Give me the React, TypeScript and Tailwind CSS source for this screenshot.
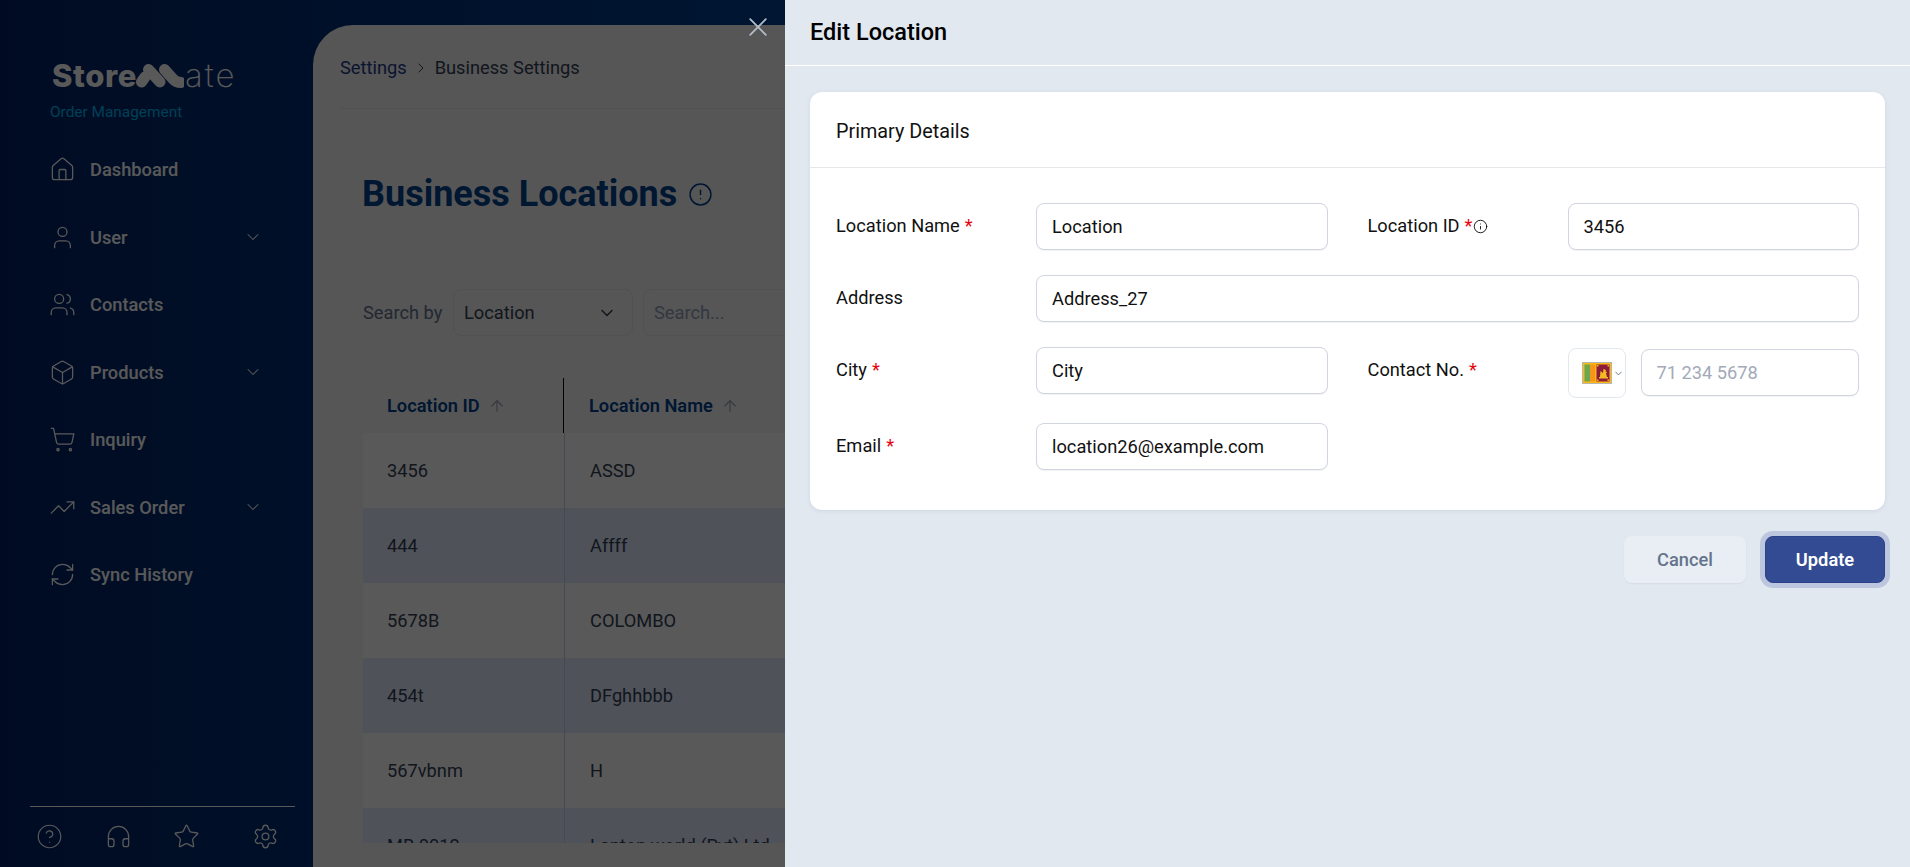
import {
  ArrowUp,
  Box,
  ChevronDown,
  ChevronRight,
  CircleAlert,
  CircleHelp,
  Headphones,
  House,
  Info,
  RefreshCw,
  Settings,
  ShoppingCart,
  Star,
  TrendingUp,
  User,
  Users,
  X,
} from "lucide-react";

const navItems = [
  { label: "Dashboard", icon: House },
  { label: "User", icon: User, more: true },
  { label: "Contacts", icon: Users },
  { label: "Products", icon: Box, more: true },
  { label: "Inquiry", icon: ShoppingCart },
  { label: "Sales Order", icon: TrendingUp, more: true },
  { label: "Sync History", icon: RefreshCw },
];

const rows = [
  ["3456", "ASSD"],
  ["444", "Affff"],
  ["5678B", "COLOMBO"],
  ["454t", "DFghhbbb"],
  ["567vbnm", "H"],
  ["MB 0012", "Lanton world (Pvt) Ltd"],
];

const Logo = () => (
  <div className="flex h-[30px] items-center pl-[12px] leading-none text-white">
    <span className="font-['Inter'] text-[31px] font-extrabold tracking-[0.6px]">Store</span>
    <svg width="48" height="25" viewBox="0 0 48 25" className="-ml-px">
      <g fill="none" stroke="currentColor" strokeWidth="11" strokeLinecap="round">
        <path d="M5.5 19L9 14" />
        <path d="M12.5 6.5L24 19" />
        <path d="M28.5 6.5L37 16Q40 19.5 45 19.5" />
      </g>
    </svg>
    <span className="ml-px font-['Inter'] text-[33px] font-extralight tracking-[2px]">ate</span>
  </div>
);

const Sidebar = () => (
  <aside className="flex h-full w-[313px] shrink-0 flex-col pt-[60px]">
    <div className="pl-[40px]">
      <Logo />
      <div className="mt-[12px] pl-[10px] text-[15.4px] leading-[20px] text-[#00b8f0]">Order Management</div>
    </div>
    <nav className="mt-[14px] flex flex-col pl-[50px] pr-[49px]">
      {navItems.map((item) => (
        <div key={item.label} className="flex h-[67.5px] items-center text-white">
          <item.icon size={27} strokeWidth={1.15} className="-mx-px shrink-0" />
          <span className="ml-[15px] flex-1 text-[18.25px] font-medium">{item.label}</span>
          {item.more && <ChevronDown size={20} strokeWidth={1.25} className="mr-[1px]" />}
        </div>
      ))}
    </nav>
    <div className="mt-auto mr-[18px] mb-[19px] ml-[30px] border-t border-white pt-[17px]">
      <div className="flex h-[24px] items-center text-white">
        <CircleHelp size={27} strokeWidth={1.05} className="ml-[5.5px]" />
        <Headphones size={27} strokeWidth={1.15} className="ml-[42px]" />
        <Star size={27} strokeWidth={1.15} className="ml-[41px]" />
        <Settings size={27} strokeWidth={1.15} className="ml-[52px]" />
      </div>
    </div>
  </aside>
);

const LocationsPage = () => (
  <main className="mt-[25px] h-[842px] flex-1 overflow-hidden rounded-tl-[40px] bg-[#f5f5f6] pl-[27px]">
    <div className="flex h-[84px] items-center gap-[6px] border-b border-gray-200 pt-[2px] text-[18.25px] text-[#334155]">
      <span className="text-[#1e3a8a]">Settings</span>
      <ChevronRight size={16} strokeWidth={1.5} />
      <span>Business Settings</span>
    </div>
    <div className="pl-[23px]">
      <div className="mt-[60px] -ml-px flex items-center gap-[11px]">
        <h1 className="text-[36px] leading-[50px] font-bold text-[#024290]">Business Locations</h1>
        <CircleAlert size={25} strokeWidth={1.4} className="text-[#024290]" />
      </div>
      <div className="mt-[70px] flex h-[47px] items-center text-[18.25px]">
        <span className="w-[90px] text-slate-500">Search by</span>
        <div className="flex h-[47px] w-[180px] items-center justify-between rounded-lg border border-gray-200 pr-[15px] pl-[10px] text-[#334155]">
          Location
          <ChevronDown size={20} strokeWidth={1.75} />
        </div>
        <div className="ml-[10px] flex h-[47px] flex-1 items-center rounded-lg border border-gray-200 pl-[10px] text-slate-400">
          Search...
        </div>
      </div>
      <div className="mt-[42px] h-[465px] overflow-hidden">
        <div className="flex h-[55px] items-center bg-[#f7f7f8] text-[18.25px] font-semibold text-[#024290]">
          <div className="flex h-full w-[201px] items-center gap-[8px] border-r border-black pl-[24px]">
            Location ID
            <ArrowUp size={18} strokeWidth={1.5} className="text-gray-400" />
          </div>
          <div className="flex h-full items-center gap-[8px] pl-[25px]">
            Location Name
            <ArrowUp size={18} strokeWidth={1.5} className="text-gray-400" />
          </div>
        </div>
        {rows.map((row, i) => (
          <div
            key={row[0]}
            className={`flex h-[75px] items-center text-[18.25px] text-[#334155] ${i % 2 ? "bg-[#e2ebff]" : "bg-white"}`}
          >
            <div className="flex h-full w-[202px] items-center border-r border-[#c3d2ee] pl-[24px]">{row[0]}</div>
            <div className="pl-[25px]">{row[1]}</div>
          </div>
        ))}
      </div>
    </div>
  </main>
);

const Label = ({ text, required, info }: { text: string; required?: boolean; info?: boolean }) => (
  <div className="flex h-[47px] w-[200px] shrink-0 items-center pb-[1px] text-[18.25px] text-[#111111]">
    {text}
    {required && <span className="ml-[5px] text-red-600">*</span>}
    {info && <Info size={15} strokeWidth={1.5} className="ml-px" />}
  </div>
);

const Field = ({ value, placeholder, className = "flex-1" }: { value?: string; placeholder?: string; className?: string }) => (
  <div
    className={`flex h-[47px] items-center rounded-lg border border-[#d1d5e0] bg-white pt-[1px] pl-[15px] text-[18.25px] shadow-[0_1px_1px_rgba(0,0,0,0.05)] ${className} ${value ? "text-[#111111]" : "text-[#a3aab8]"}`}
  >
    {value || placeholder}
  </div>
);

const SriLankaFlag = () => (
  <svg width="30" height="22" viewBox="0 0 30 22" className="shrink-0">
    <rect width="30" height="22" fill="#b5b5b5" />
    <rect x="1" y="1" width="28" height="20" fill="#fdb813" />
    <rect x="2.5" y="2.5" width="5.5" height="17" fill="#6aa84f" />
    <rect x="8" y="2.5" width="5" height="17" fill="#f7941d" />
    <rect x="14.5" y="2.5" width="13" height="17" fill="#8d1b3d" />
    <path d="M17 15h9v1.5h-9zM18 15l.5-6 2.5 2 .5-4 2.5 1-.5 1.5 1.5 .5-1 1.5 1 3.5z" fill="#f5b921" />
    <rect x="15" y="3" width="1.5" height="1.5" fill="#fdb813" />
    <rect x="25.5" y="3" width="1.5" height="1.5" fill="#fdb813" />
    <rect x="15" y="17.5" width="1.5" height="1.5" fill="#fdb813" />
    <rect x="25.5" y="17.5" width="1.5" height="1.5" fill="#fdb813" />
  </svg>
);

const EditDrawer = () => (
  <div className="absolute top-0 right-0 bottom-0 z-20 w-[1125px] bg-[#e1e8f0]">
    <button className="absolute top-[15px] -left-[39px] text-[#b4bccb]">
      <X size={24} strokeWidth={1.4} className="scale-[1.3]" />
    </button>
    <header className="flex h-[66px] items-center border-b border-white pl-[25px] text-[23.5px] font-medium text-black">
      Edit Location
    </header>
    <div className="px-[25px] pt-[26px]">
      <section className="h-[418px] rounded-xl bg-white shadow-[0_1px_4px_rgba(100,116,139,0.15)]">
        <div className="flex h-[76px] items-center border-b border-[#e5e7eb] pt-[4px] pl-[26px] text-[19.8px] text-[#111111]">
          Primary Details
        </div>
        <div className="flex flex-col gap-[25px] pt-[35px] pr-[26px] pl-[26px]">
          <div className="flex h-[47px] gap-[40px]">
            <div className="flex flex-1">
              <Label text="Location Name" required />
              <Field value="Location" />
            </div>
            <div className="flex flex-1">
              <Label text="Location ID" required info />
              <Field value="3456" />
            </div>
          </div>
          <div className="flex h-[47px]">
            <Label text="Address" />
            <Field value="Address_27" />
          </div>
          <div className="flex h-[51px] gap-[40px]">
            <div className="flex flex-1">
              <Label text="City" required />
              <Field value="City" />
            </div>
            <div className="flex flex-1">
              <Label text="Contact No." required />
              <div className="mt-[1px] flex h-[50px] w-[58px] shrink-0 items-center gap-[1px] rounded-lg border border-[#e2e8f0] pl-[13px]">
                <SriLankaFlag />
                <ChevronDown size={11} className="shrink-0 text-gray-500" />
              </div>
              <Field placeholder="71 234 5678" className="mt-[2px] ml-[15px] flex-1" />
            </div>
          </div>
          <div className="flex h-[47px] gap-[40px]">
            <div className="flex flex-1">
              <Label text="Email" required />
              <Field value="location26@example.com" />
            </div>
            <div className="flex-1" />
          </div>
        </div>
      </section>
      <div className="mt-[26px] flex justify-end gap-[19px]">
        <button className="h-[47px] w-[122px] rounded-lg bg-[#e9eef5] text-[18.25px] font-medium text-[#64748b] shadow-[0_1px_2px_rgba(0,0,0,0.05)]">
          Cancel
        </button>
        <button className="h-[47px] w-[120px] rounded-lg border border-[#2a4288] bg-[#324b93] text-[18.25px] font-semibold text-white ring-[5px] ring-[#bcc6de]">
          Update
        </button>
      </div>
    </div>
  </div>
);

export default function App() {
  return (
    <div className="relative flex h-[867px] w-[1910px] overflow-hidden bg-linear-to-r from-[#002264] to-[#006cd6] font-['Roboto',sans-serif]">
      <Sidebar />
      <LocationsPage />
      <div className="absolute inset-0 z-10 bg-black/65" />
      <EditDrawer />
    </div>
  );
}
